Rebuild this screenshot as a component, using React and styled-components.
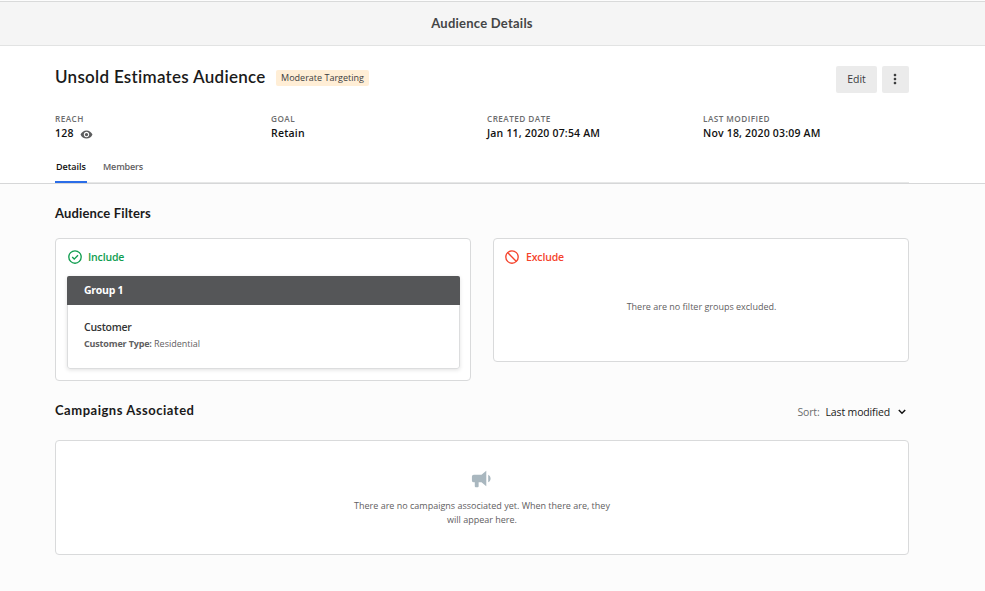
import React from "react";
import styled, { createGlobalStyle } from "styled-components";
import { MdRemoveRedEye, MdMoreVert } from "react-icons/md";

const GlobalStyle = createGlobalStyle`
  * {
    box-sizing: border-box;
  }
  body {
    margin: 0;
    background: #fcfcfc;
    color: #1a1a1a;
    font-family: "Open Sans", "Noto Sans", sans-serif;
    overflow: hidden;
  }
  h1, h2, h3, p {
    margin: 0;
  }
  button {
    font-family: inherit;
    border: 0;
    padding: 0;
    background: none;
  }
`;

const Page = styled.div`
  height: 591px;
  padding-top: 1px;
`;

const TopBar = styled.header`
  height: 45px;
  padding: 0 21px 1px 0;
  display: flex;
  align-items: center;
  justify-content: center;
  background: #f5f5f5;
  border-top: 1px solid #d9dada;
  border-bottom: 1px solid #e2e3e3;
`;

const TopBarTitle = styled.h1`
  font-family: Lato, sans-serif;
  font-size: 13px;
  line-height: 18px;
  font-weight: 700;
  letter-spacing: 0.24px;
  color: #444546;
`;

const Summary = styled.section`
  height: 138px;
  padding: 20px 76px 0 55px;
  background: #fff;
  border-bottom: 1px solid #d6d7d8;
`;

const TitleRow = styled.div`
  height: 27px;
  display: flex;
  align-items: flex-start;
`;

const AudienceName = styled.h2`
  width: 221px;
  font-family: Lato, sans-serif;
  font-size: 17px;
  line-height: 22px;
  font-weight: 600;
  letter-spacing: 0.28px;
  white-space: nowrap;
`;

const Badge = styled.span`
  width: 93px;
  height: 16px;
  margin-top: 4px;
  border-radius: 2px;
  background: #ffeed6;
  color: #3c3d3e;
  font-size: 9px;
  line-height: 16px;
  text-align: center;
  white-space: nowrap;
`;

const Actions = styled.div`
  margin-left: auto;
  display: flex;
  gap: 5px;
`;

const Button = styled.button`
  width: ${({ $width }) => $width}px;
  height: 27px;
  padding-bottom: 2px;
  display: flex;
  align-items: center;
  justify-content: center;
  border-radius: 2px;
  background: #ebebeb;
  color: #3a3b3c;
  font-size: 10.5px;
  line-height: 14px;
  font-weight: 500;
`;

const MoreButton = styled(Button)`
  padding: 0 2px 1px 0;
`;

const Stats = styled.div`
  display: grid;
  grid-template-columns: repeat(4, 216px);
  margin-top: 20px;
`;

const StatLabel = styled.div`
  font-size: 8.2px;
  line-height: 12px;
  font-weight: 600;
  letter-spacing: 0.45px;
  color: #6b6c6d;
`;

const StatValue = styled.div`
  display: flex;
  align-items: center;
  gap: 6px;
  margin-top: 1px;
  font-size: 10.5px;
  line-height: 15px;
  font-weight: 600;
  letter-spacing: 0.19px;
  color: #111;
  white-space: nowrap;

  svg {
    margin-top: 1px;
    color: #5c5d5e;
  }
`;

const Tabs = styled.nav`
  display: flex;
  gap: 15px;
  height: 27px;
  margin-top: 15px;
  border-bottom: 1px solid #e6e7e7;
`;

const Tab = styled.button`
  height: 27px;
  padding: 0 1px 3px;
  border-bottom: 2px solid ${({ $active }) => ($active ? "#2a6de8" : "transparent")};
  color: ${({ $active }) => ($active ? "#111" : "#5f6061")};
  font-size: 9px;
  line-height: 14px;
  font-weight: 600;
  letter-spacing: ${({ $active }) => ($active ? 0 : -0.15)}px;
`;

const Content = styled.main`
  padding: 19px 76px 0 55px;
`;

const SectionTitle = styled.h2`
  font-family: Lato, sans-serif;
  font-size: 13px;
  line-height: 20px;
  font-weight: 700;
  letter-spacing: ${({ $spacing }) => $spacing}px;
`;

const Filters = styled.div`
  display: grid;
  grid-template-columns: 416px 416px;
  gap: 22px;
  align-items: start;
  margin-top: 15px;
`;

const Card = styled.div`
  height: ${({ $height }) => $height}px;
  padding: 11px 10px 0 11px;
  border: 1px solid #d9dadb;
  border-radius: 4px;
  background: #fff;
`;

const CardHeading = styled.h3`
  display: flex;
  align-items: center;
  gap: ${({ $gap }) => $gap}px;
  height: 14px;
  padding-left: ${({ $indent }) => $indent}px;
  color: ${({ $color }) => $color};
  font-size: 10.5px;
  line-height: 14px;
  font-weight: 600;
  letter-spacing: -0.15px;

  span {
    margin-top: -1px;
  }
`;

const Group = styled.div`
  height: 93px;
  margin-top: 12px;
  border: 1px solid #dcddde;
  border-radius: 3px;
  box-shadow: 0 1px 4px rgba(0, 0, 0, 0.12);
`;

const GroupName = styled.div`
  height: 29px;
  margin: -1px -1px 0;
  padding-left: 17px;
  border-radius: 2px 2px 0 0;
  background: #555658;
  color: #fff;
  font-size: 10.5px;
  line-height: 29px;
  font-weight: 700;
  letter-spacing: -0.28px;
`;

const GroupBody = styled.div`
  padding: 14px 16px;
`;

const FilterName = styled.div`
  font-size: 10.5px;
  line-height: 16px;
  font-weight: 600;
  letter-spacing: -0.25px;
  color: #333435;
`;

const FilterRule = styled.div`
  margin-top: 1px;
  font-size: 9px;
  line-height: 16px;
  color: #5f6061;

  b {
    font-weight: 700;
    letter-spacing: -0.17px;
  }
`;

const EmptyText = styled.p`
  width: ${({ $width }) => $width || "auto"};
  margin: ${({ $top }) => $top}px auto 0;
  font-size: 9px;
  line-height: 14px;
  text-align: center;
  color: #5f6061;
`;

const CampaignsHeader = styled.div`
  display: flex;
  justify-content: space-between;
  margin-top: 19px;
`;

const Sort = styled.div`
  display: flex;
  align-items: center;
  height: 22px;
  margin-top: 1px;
  padding-right: 3px;
  font-size: 10.5px;
  letter-spacing: -0.15px;
  color: #6b6c6d;
`;

const SortValue = styled.span`
  margin: 0 8px 0 6px;
  color: #1a1a1a;
`;

const Campaigns = styled(Card)`
  margin-top: 17px;
  padding: 26px 0 0;

  svg {
    display: block;
    margin: 0 auto;
    transform: translateX(-1px);
  }
`;

const CheckIcon = () => (
  <svg width="14" height="14" viewBox="0 0 14 14" fill="none" stroke="currentColor" strokeWidth="1.35">
    <circle cx="7" cy="7" r="6.2" />
    <path d="M4.2 7.1l2 2L10 5.2" />
  </svg>
);

const BlockIcon = () => (
  <svg width="14" height="14" viewBox="0 0 14 14" fill="none" stroke="currentColor" strokeWidth="1.35">
    <circle cx="7" cy="7" r="6.2" />
    <path d="M2.6 2.6l8.8 8.8" />
  </svg>
);

const ChevronIcon = () => (
  <svg width="8" height="6" viewBox="0 0 8 6" fill="none" stroke="#111" strokeWidth="1.5">
    <path d="M.8 1L4 4.2 7.2 1" />
  </svg>
);

const MegaphoneIcon = () => (
  <svg width="23" height="23" viewBox="0 0 24 24" fill="#a9b7bf">
    <path d="M12 8H4a2 2 0 0 0-2 2v4a2 2 0 0 0 2 2h1v4a1 1 0 0 0 1 1h2a1 1 0 0 0 1-1v-4h3l5 4V4l-5 4m9.5 4c0 1.71-.96 3.26-2.5 4V8c1.53.75 2.5 2.3 2.5 4z" />
  </svg>
);

const stats = [
  { label: "REACH", value: "128", icon: <MdRemoveRedEye size={13} /> },
  { label: "GOAL", value: "Retain" },
  { label: "CREATED DATE", value: "Jan 11, 2020 07:54 AM" },
  { label: "LAST MODIFIED", value: "Nov 18, 2020 03:09 AM" },
];

const App = () => {
  return (
    <Page>
      <GlobalStyle />
      <TopBar>
        <TopBarTitle>Audience Details</TopBarTitle>
      </TopBar>
      <Summary>
        <TitleRow>
          <AudienceName>Unsold Estimates Audience</AudienceName>
          <Badge>Moderate Targeting</Badge>
          <Actions>
            <Button $width={41}>Edit</Button>
            <MoreButton $width={27} aria-label="More">
              <MdMoreVert size={16} />
            </MoreButton>
          </Actions>
        </TitleRow>
        <Stats>
          {stats.map(({ label, value, icon }) => (
            <div key={label}>
              <StatLabel>{label}</StatLabel>
              <StatValue>
                {value}
                {icon}
              </StatValue>
            </div>
          ))}
        </Stats>
        <Tabs>
          <Tab $active>Details</Tab>
          <Tab>Members</Tab>
        </Tabs>
      </Summary>
      <Content>
        <SectionTitle $spacing={0.15}>Audience Filters</SectionTitle>
        <Filters>
          <Card $height={143}>
            <CardHeading $color="#0f9d4f" $indent={1} $gap={6}>
              <CheckIcon />
              <span>Include</span>
            </CardHeading>
            <Group>
              <GroupName>Group 1</GroupName>
              <GroupBody>
                <FilterName>Customer</FilterName>
                <FilterRule>
                  <b>Customer Type:</b> Residential
                </FilterRule>
              </GroupBody>
            </Group>
          </Card>
          <Card $height={124}>
            <CardHeading $color="#f5432c" $indent={0} $gap={7}>
              <BlockIcon />
              <span>Exclude</span>
            </CardHeading>
            <EmptyText $top={36}>There are no filter groups excluded.</EmptyText>
          </Card>
        </Filters>
        <CampaignsHeader>
          <SectionTitle $spacing={0.52}>Campaigns Associated</SectionTitle>
          <Sort>
            Sort: <SortValue>Last modified</SortValue>
            <ChevronIcon />
          </Sort>
        </CampaignsHeader>
        <Campaigns $height={115}>
          <MegaphoneIcon />
          <EmptyText $top={9} $width="270px">
            There are no campaigns associated yet. When there are, they will appear here.
          </EmptyText>
        </Campaigns>
      </Content>
    </Page>
  );
};

export default App;
